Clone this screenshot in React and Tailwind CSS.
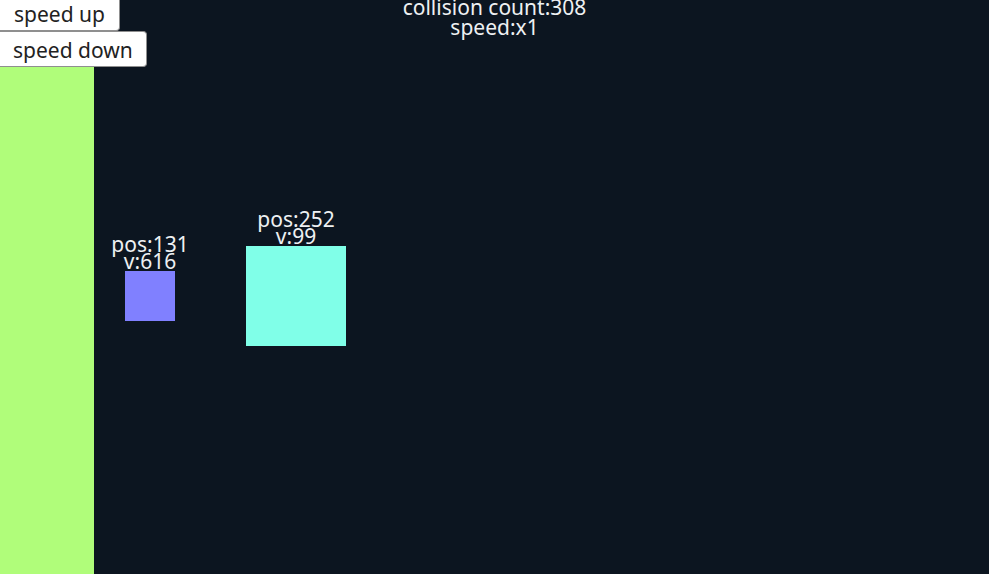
import React from "react";

const Block = ({ left, size, center, color, pos, v }) => (
  <div
    className="absolute flex flex-col items-center"
    style={{ left, top: center - size / 2, width: size }}
  >
    <div className="absolute bottom-full mb-[1px] flex flex-col items-center text-[21px] leading-[17px] text-[#eef0f2] whitespace-nowrap">
      <span>pos:{pos}</span>
      <span>v:{v}</span>
    </div>
    <div className={color} style={{ width: size, height: size }} />
  </div>
);

export default function App() {
  return (
    <div className="relative h-[574px] w-[989px] overflow-hidden bg-[#0c1520] font-['Noto_Sans',sans-serif]">
      {/* controls */}
      <div className="relative z-10 mt-[-5px] flex flex-col items-start">
        <button className="h-[36px] rounded-r-[4px] border border-l-0 border-[#8f8f8f] bg-white px-[14px] pt-[2px] text-[21px] leading-none text-[#222]">
          speed up
        </button>
        <button className="h-[36px] rounded-r-[4px] border border-l-0 border-[#8f8f8f] bg-white px-[13px] pt-[2px] text-[21px] leading-none text-[#222]">
          speed down
        </button>
      </div>

      {/* header */}
      <div className="absolute left-0 right-0 top-[-3px] flex flex-col items-center text-[21px] leading-[20px] text-[#eef0f2]">
        <span>collision count:308</span>
        <span>speed:x1</span>
      </div>

      {/* wall */}
      <div className="absolute bottom-0 left-0 top-[67px] w-[94px] bg-[#b0fd7a]" />

      <Block left={125} size={50} center={296} color="bg-[#8080ff]" pos={131} v={616} />
      <Block left={246} size={100} center={296} color="bg-[#80ffe8]" pos={252} v={99} />
    </div>
  );
}
